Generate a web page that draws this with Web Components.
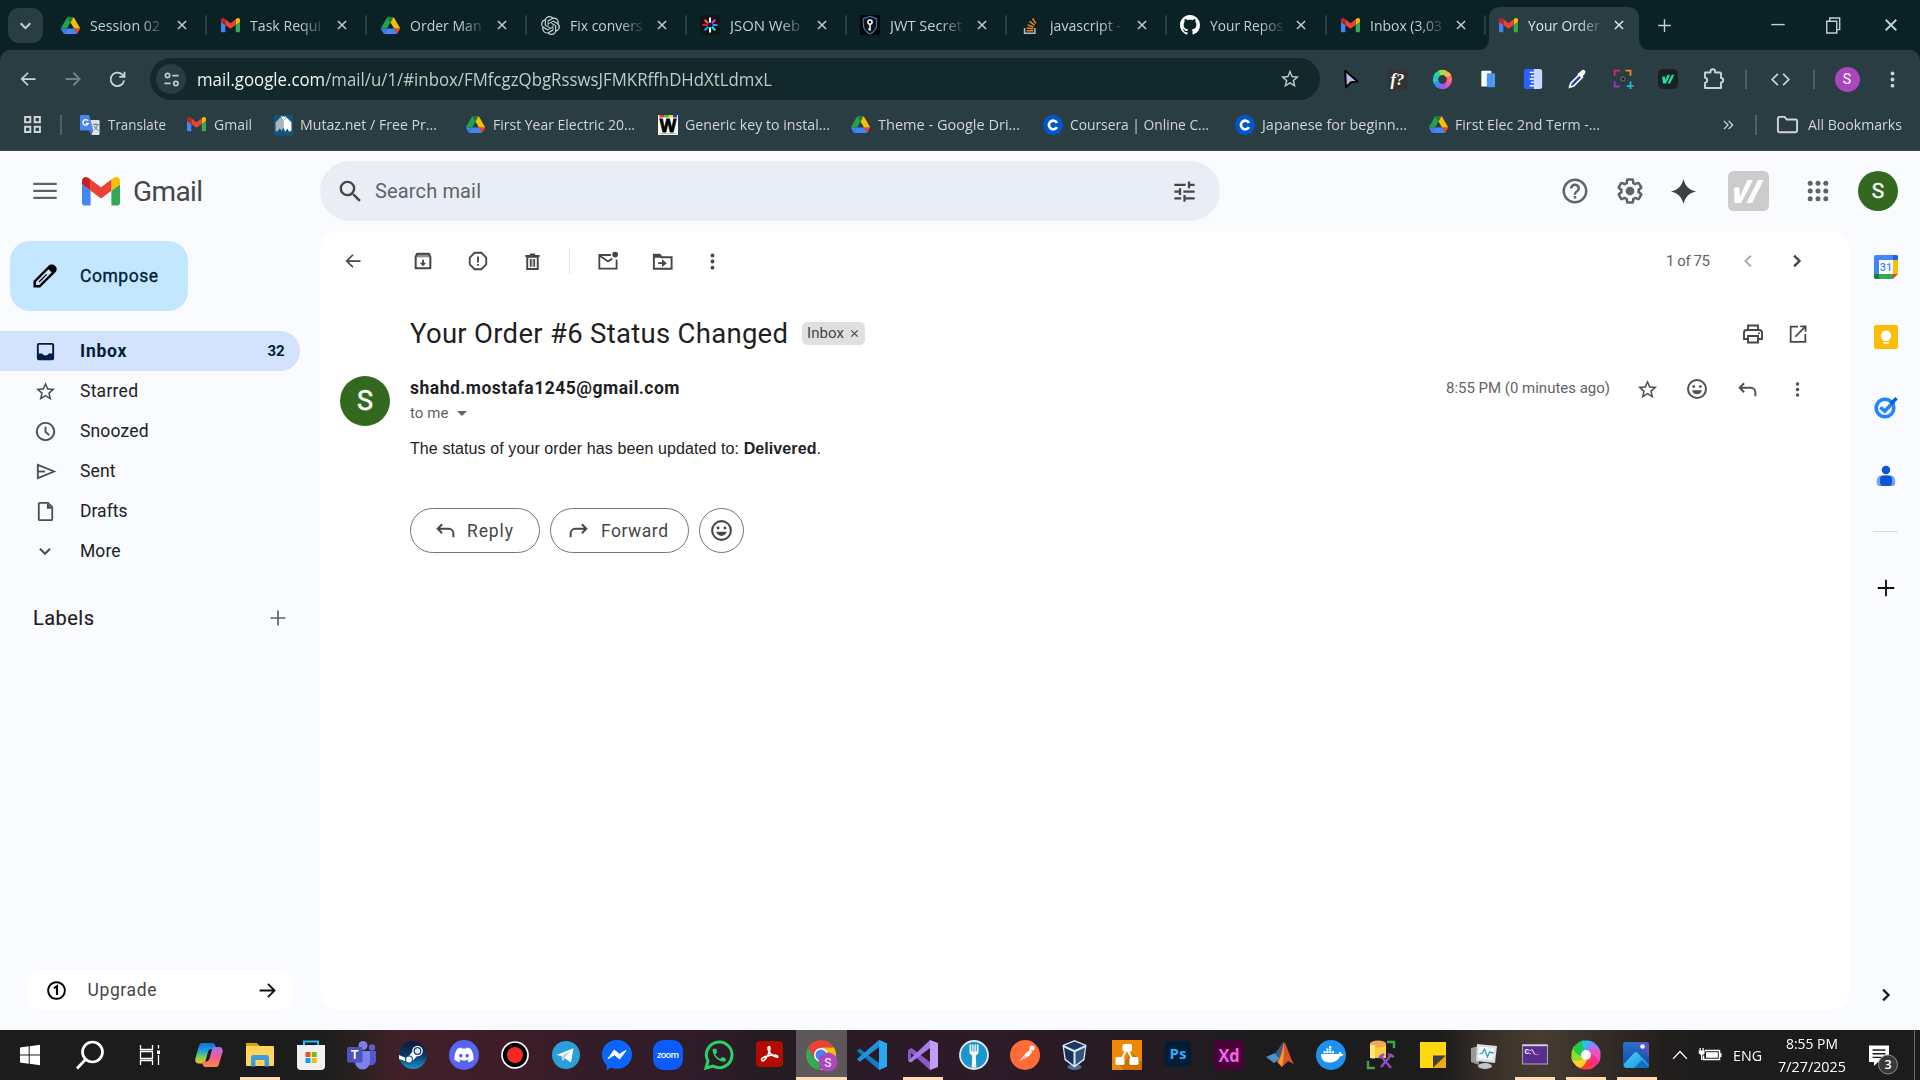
<!DOCTYPE html>
<html lang="en">
<head>
<meta charset="utf-8">
<title>Your Order #6 Status Changed - Gmail</title>
<style>
html,body{margin:0;padding:0;width:1920px;height:1080px;overflow:hidden;background:#f9fbff}
</style>
</head>
<body>
<desktop-screen></desktop-screen>
<script>
const st = (d, w = 2, extra = '') => `<path d="${d}" fill="none" stroke="currentColor" stroke-width="${w}" ${extra}/>`;
const fl = d => `<path d="${d}" fill="currentColor"/>`;
const C = [24, 24];
const SMILE = `<circle cx="12" cy="12" r="9" fill="none" stroke="currentColor" stroke-width="2"/><circle cx="8.7" cy="9.6" r="1.4" fill="currentColor"/><circle cx="15.3" cy="9.6" r="1.4" fill="currentColor"/><path d="M7 13.2h10c-.7 2.4-2.6 4-5 4s-4.300-1.600-5-4z" fill="currentColor"/>`;
const ICONS = {
  menu: [C, fl('M1.200 19.400h21.600v-2.100H1.200zM1.200 12.900h21.600v-2.100H1.200zM1.200 4.300v2.100h21.600V4.300z')],
  search: [C, fl('M15.5 14h-.79l-.28-.27A6.471 6.471 0 0 0 16 9.500 6.500 6.500 0 1 0 9.500 16c1.610 0 3.090-.59 4.230-1.570l.27.28v.79l5 4.990L20.490 19l-4.990-5zm-6 0C7.010 14 5 11.990 5 9.500S7.010 5 9.500 5 14 7.010 14 9.500 11.990 14 9.500 14z')],
  tune: [C, fl('M3 17v2h6v-2H3zM3 5v2h10V5H3zm10 16v-2h8v-2h-8v-2h-2v6h2zM7 9v2H3v2h4v2h2V9H7zm14 4v-2H11v2h10zm-6-4h2V7h4V5h-4V3h-2v6z')],
  help: [C, fl('M11 18h2v-2h-2v2zm1-16C6.480 2 2 6.480 2 12s4.480 10 10 10 10-4.480 10-10S17.520 2 12 2zm0 18c-4.410 0-8-3.590-8-8s3.590-8 8-8 8 3.590 8 8-3.590 8-8 8zm0-14c-2.210 0-4 1.790-4 4h2c0-1.100.9-2 2-2s2 .9 2 2c0 2-3 1.750-3 5h2c0-2.250 3-2.500 3-5 0-2.210-1.790-4-4-4z')],
  gear: [C, fl('M13.85 22.25h-3.7c-.74 0-1.36-.54-1.45-1.27l-.27-1.89c-.27-.14-.53-.29-.79-.46l-1.8.72c-.7.26-1.47-.03-1.81-.65L2.2 15.53c-.35-.66-.2-1.44.36-1.88l1.53-1.19c-.01-.15-.02-.3-.02-.46 0-.15.01-.31.02-.46l-1.52-1.19c-.59-.45-.74-1.26-.37-1.88l1.85-3.19c.34-.62 1.11-.9 1.79-.63l1.81.73c.26-.17.52-.32.78-.46l.27-1.91c.09-.7.71-1.25 1.44-1.25h3.7c.74 0 1.36.54 1.45 1.27l.27 1.89c.27.14.53.29.79.46l1.8-.72c.71-.26 1.48.03 1.82.65l1.84 3.18c.36.66.2 1.44-.36 1.88l-1.52 1.19c.01.15.02.3.02.46s-.01.31-.02.46l1.52 1.19c.56.45.72 1.23.37 1.86l-1.86 3.22c-.34.62-1.11.9-1.8.63l-1.8-.72c-.26.17-.52.32-.78.46l-.27 1.91c-.1.68-.72 1.22-1.46 1.22zm-3.23-2h2.76l.37-2.55.53-.22c.44-.18.88-.44 1.34-.78l.45-.34 2.38.96 1.38-2.4-2.03-1.58.07-.56c.03-.26.06-.51.06-.78s-.03-.53-.06-.78l-.07-.56 2.03-1.58-1.39-2.4-2.39.96-.45-.35c-.42-.32-.87-.58-1.33-.77l-.52-.22-.37-2.55h-2.76l-.37 2.55-.53.21c-.44.19-.88.44-1.34.79l-.45.33-2.38-.95-1.39 2.39 2.03 1.58-.07.56a7 7 0 0 0-.06.79c0 .26.02.53.06.78l.07.56-2.03 1.58 1.38 2.4 2.39-.96.45.35c.43.33.86.58 1.33.77l.53.22.38 2.55z') + '<circle cx="12" cy="12" r="3.500" fill="currentColor"/>'],
  spark: [C, fl('M12 0c1.200 6.300 5.700 10.800 12 12-6.300 1.200-10.800 5.700-12 12-1.200-6.300-5.700-10.800-12-12C6.300 10.800 10.800 6.300 12 0z')],
  apps: [C, [4.2, 12, 19.8].map(x => [4.2, 12, 19.8].map(y => `<circle cx="${x}" cy="${y}" r="2.500" fill="currentColor"/>`).join('')).join('')],
  star: [C, fl('M22 9.240l-7.190-.62L12 2 9.190 8.630 2 9.240l5.460 4.730L5.820 21 12 17.270 18.180 21l-1.630-7.030L22 9.240zM12 15.400l-3.760 2.270 1-4.280-3.320-2.880 4.380-.38L12 6.100l1.710 4.040 4.380.38-3.320 2.880 1 4.280L12 15.400z')],
  pencil: [C, `<path d="M2.500 21.500V17L16.300 3.200c.9-.9 2.100-.9 3 0l1.500 1.500c.9.9.9 2.100 0 3L7 21.500z" fill="none" stroke="#000" stroke-width="2.300"/><path d="M14.500 5l4.500 4.500 3-3.300c.8-1 .8-1.800 0-2.700l-1.600-1.600c-.9-.8-1.700-.8-2.600 0z" fill="#000"/><path d="M6.500 17.500l7-7" stroke="#000" stroke-width="1.200"/>`],
  inbox: [C, `<path fill="#041e49" fill-rule="evenodd" d="M5 3h14a2 2 0 0 1 2 2v14a2 2 0 0 1-2 2H5a2 2 0 0 1-2-2V5a2 2 0 0 1 2-2zm0 2v9h3.600c.7 1.300 1.900 2.100 3.400 2.100s2.700-.8 3.400-2.100H19V5z"/>`],
  clock: [C, st('M12 3a9 9 0 1 0 .01 0zM12 7v5.300l3.800 3.500', 2)],
  send: [C, st('M4 5l17 7-17 7z', 1.900, 'stroke-linejoin="miter"') + st('M4 12h7.500', 1.900)],
  draft: [C, st('M6 3h8.500L19 7.500V20a1 1 0 0 1-1 1H6a1 1 0 0 1-1-1V4a1 1 0 0 1 1-1z', 1.900) + fl('M13.500 3v6H19z')],
  down: [C, st('M6.500 9.500l5.500 5.500 5.500-5.500', 2.300)],
  plus: [C, st('M12 3v18M3 12h18', 2)],
  arrowR: [C, st('M3 12h17M12.500 4.500L20 12l-7.500 7.500', 2.200)],
  arrowL: [C, st('M21 12H4.500M12 4.500L4.500 12l7.500 7.500', 2.100)],
  one: [C, st('M12 2.500a9.500 9.500 0 1 0 .01 0z', 2.200) + `<path d="M9 9.300l3.600-2.200v10" fill="none" stroke="currentColor" stroke-width="2.500"/>`],
  archive: [C, st('M4 7.500v12.500h16V7.500L18.500 4h-13z', 2.200, 'stroke-linejoin="round"') + '<path d="M5 4.500h14v3.500H5z" fill="currentColor" opacity=".6"/>' + fl('M11 10.500h2V14h2.500L12 17.700 8.500 14H11z')],
  spam: [C, st('M8.300 3h7.400L21 8.300v7.400L15.700 21H8.300L3 15.700V8.300z', 2) + fl('M11 7h2v6.500h-2zM11 15.200h2v2h-2z')],
  trash: [C, st('M6 6.500h12V20.500H6zM3.800 5.800h16.400M9 4h6', 2.200) + '<path d="M9 9h2v9H9zM13 9h2v9h-2z" fill="currentColor"/><path d="M11 9h2v9h-2z" fill="currentColor" opacity=".35"/>'],
  unread: [C, st('M15.500 5.200H3.500v14.300h18V9.800M4 6l8.500 6L17 9', 1.900) + '<circle cx="20" cy="4.800" r="3" fill="currentColor"/>'],
  moveto: [C, st('M3 6v13.500h18.500V7.500H11L9 5H3z', 2) + fl('M3 5h7l2 3H3zM11.500 9.700l5 4-5 4v-3h-4v-2h4z')],
  dots: [C, '<circle cx="12" cy="5" r="2.200" fill="currentColor"/><circle cx="12" cy="12" r="2.200" fill="currentColor"/><circle cx="12" cy="19" r="2.200" fill="currentColor"/>'],
  left: [C, st('M15.500 5.500L9 12l6.500 6.500', 2.400)],
  right: [C, st('M8.500 5.500L15 12l-6.500 6.500', 2.900)],
  print: [C, st('M7 8V3.500h10V8M7 17H3V10.500A2.500 2.500 0 0 1 5.500 8h13a2.500 2.500 0 0 1 2.500 2.500V17h-4M7 14h10v6.500H7z', 1.900) + '<circle cx="18" cy="11.200" r="1" fill="currentColor"/>'],
  open: [C, st('M12 4H4v16.500h16V12M14.500 3.700H20.300V9.500M20 4L9 15', 1.900)],
  smile: [C, SMILE],
  reply: [C, st('M8.500 5.500L3.800 10.200l4.700 4.700M4 10.200h11.500a4.700 4.700 0 0 1 4.700 4.700V19', 2)],
  forward: [C, st('M15.500 5.500l4.700 4.700-4.700 4.700M20 10.200H8.500a4.700 4.700 0 0 0-4.700 4.700V19', 2)],
  close: [C, st('M5 5l14 14M19 5L5 19', 2.500)],
  gmail: [[88, 66], `<g transform="translate(-52 -42)"><path fill="#4285f4" d="M58 108h14V74L52 59v43c0 3.320 2.690 6 6 6"/><path fill="#34a853" d="M120 108h14c3.320 0 6-2.690 6-6V59l-20 15"/><path fill="#fbbc04" d="M120 48v26l20-15v-8c0-7.420-8.470-11.650-14.400-7.200"/><path fill="#ea4335" d="M72 74V48l24 18 24-18v26L96 92"/><path fill="#c5221f" d="M52 51v8l20 15V48l-5.600-4.200c-5.940-4.450-14.400-.22-14.400 7.200"/></g>`],
  drive: [[87.3, 78], `<path fill="#3b7ff5" d="m6.600 66.850 3.850 6.650c.8 1.400 1.950 2.500 3.300 3.300l13.750-23.800h-27.500c0 1.550.4 3.100 1.200 4.500z"/><path fill="#22a152" d="m43.650 25-13.750-23.800c-1.350.8-2.500 1.900-3.300 3.300l-25.400 44a9.060 9.060 0 0 0 -1.200 4.500h27.500z"/><path fill="#ea4335" d="m73.550 76.800c1.350-.8 2.500-1.900 3.300-3.300l1.600-2.750 7.650-13.250c.8-1.400 1.200-2.950 1.200-4.500h-27.502l5.852 11.500z"/><path fill="#188038" d="m43.650 25 13.750-23.800c-1.350-.8-2.900-1.200-4.500-1.200h-18.500c-1.600 0-3.150.45-4.500 1.200z"/><path fill="#4285f4" d="m59.800 53h-32.300l-13.750 23.800c1.350.8 2.900 1.200 4.500 1.200h50.800c1.600 0 3.150-.45 4.500-1.200z"/><path fill="#fbbc04" d="m73.400 26.500-12.700-22c-.8-1.400-1.950-2.500-3.300-3.300l-13.750 23.800 16.150 28h27.450c0-1.550-.4-3.100-1.200-4.500z"/>`],
  openai: [C, fl('M22.2819 9.8211a5.9847 5.9847 0 0 0-.5157-4.9108 6.0462 6.0462 0 0 0-6.5098-2.9A6.0651 6.0651 0 0 0 4.9807 4.1818a5.9847 5.9847 0 0 0-3.9977 2.9 6.0462 6.0462 0 0 0 .7427 7.0966 5.98 5.98 0 0 0 .511 4.9107 6.051 6.051 0 0 0 6.5146 2.9001A5.9847 5.9847 0 0 0 13.2599 24a6.0557 6.0557 0 0 0 5.7718-4.2058 5.9894 5.9894 0 0 0 3.9977-2.9001 6.0557 6.0557 0 0 0-.7475-7.0729zm-9.022 12.6081a4.4755 4.4755 0 0 1-2.8764-1.0408l.1419-.0804 4.7783-2.7582a.7948.7948 0 0 0 .3927-.6813v-6.7369l2.02 1.1686a.071.071 0 0 1 .038.052v5.5826a4.504 4.504 0 0 1-4.4945 4.4944zm-9.6607-4.1254a4.4708 4.4708 0 0 1-.5346-3.0137l.142.0852 4.783 2.7582a.7712.7712 0 0 0 .7806 0l5.8428-3.3685v2.3324a.0804.0804 0 0 1-.0332.0615L9.74 19.9502a4.4992 4.4992 0 0 1-6.1408-1.6464zM2.3408 7.8956a4.485 4.485 0 0 1 2.3655-1.9728V11.6a.7664.7664 0 0 0 .3879.6765l5.8144 3.3543-2.0201 1.1685a.0757.0757 0 0 1-.071 0l-4.8303-2.7865A4.504 4.504 0 0 1 2.3408 7.872zm16.5963 3.8558L13.1038 8.364 15.1192 7.2a.0757.0757 0 0 1 .071 0l4.8303 2.7913a4.4944 4.4944 0 0 1-.6765 8.1042v-5.6772a.79.79 0 0 0-.407-.667zm2.0107-3.0231l-.142-.0852-4.7735-2.7818a.7759.7759 0 0 0-.7854 0L9.409 9.2297V6.8974a.0662.0662 0 0 1 .0284-.0615l4.8303-2.7866a4.4992 4.4992 0 0 1 6.6802 4.66zM8.3065 12.863l-2.02-1.1638a.0804.0804 0 0 1-.038-.0567V6.0742a4.4992 4.4992 0 0 1 7.3757-3.4537l-.142.0805L8.704 5.459a.7948.7948 0 0 0-.3927.6813zm1.0976-2.3654l2.602-1.4998 2.6069 1.4998v2.9994l-2.5974 1.4997-2.6067-1.4997Z')],
  jwt: [C, '<rect width="24" height="24" rx="4" fill="#141414"/>' + ['#fff', '#d63aff', '#3a8bff', '#00f2e6', '#fff', '#00b9f1', '#fb015b', '#ff5a3c'].map((c, i) => `<path d="M12 9V3" stroke="${c}" stroke-width="2.400" transform="rotate(${i * 45} 12 12)"/>`).join('')],
  shield: [C, '<rect width="24" height="24" fill="#050505"/><path d="M12 1.500l8 3v7c0 5.500-3.500 9.300-8 11.200-4.500-1.900-8-5.700-8-11.200v-7z" fill="#101418" stroke="#3d7fc0" stroke-width="1.300"/><circle cx="12" cy="8.500" r="2.500" fill="none" stroke="#fff" stroke-width="1.800"/><path d="M12 11v8M12 17h-2" stroke="#fff" stroke-width="1.800"/>'],
  stack: [C, '<path d="M4.500 15v6.700h13V15" fill="none" stroke="#bcbbbb" stroke-width="1.900"/><path d="M7 18.600h8.300M7.300 15.200l8 .9M8.300 11.200l7.500 2.600M10.800 6.700l6.300 4.700M14.500 3l4.300 6.400" stroke="#f48024" stroke-width="1.900"/>'],
  github: [[16, 16], '<g color="#fff">' + fl('M8 0C3.580 0 0 3.580 0 8c0 3.540 2.290 6.530 5.470 7.590.4.070.55-.17.55-.38 0-.19-.01-.82-.01-1.490-2.010.37-2.530-.49-2.690-.94-.09-.23-.48-.94-.82-1.130-.28-.15-.68-.52-.01-.53.63-.01 1.080.58 1.230.82.72 1.210 1.870.87 2.330.66.07-.52.28-.87.51-1.070-1.780-.2-3.640-.89-3.640-3.950 0-.87.31-1.590.82-2.150-.08-.2-.36-1.020.08-2.120 0 0 .67-.21 2.200.82.64-.18 1.320-.27 2-.27.68 0 1.360.09 2 .27 1.530-1.040 2.200-.82 2.200-.82.44 1.100.16 1.920.08 2.120.51.56.82 1.270.82 2.150 0 3.070-1.870 3.750-3.650 3.950.29.25.54.73.54 1.480 0 1.070-.01 1.930-.01 2.200 0 .21.15.46.55.38A8.013 8.013 0 0 0 16 8c0-4.420-3.580-8-8-8z') + '</g>'],
  reload: [C, st('M19.500 13A7.700 7.700 0 1 1 17.300 6.300L19.500 8.500', 2.100) + st('M20 3v6h-6', 2.100)],
  site: [C, st('M13 7h8M3 17h8', 2.300) + '<circle cx="7" cy="7" r="2.700" fill="none" stroke="currentColor" stroke-width="2.200"/><circle cx="17.500" cy="17" r="2.700" fill="none" stroke="currentColor" stroke-width="2.200"/>'],
  cursor: [C, '<path d="M5 2l15 13-8 .8L6 22z" fill="#8ec9f7" stroke="#000" stroke-width="2.300" stroke-linejoin="round"/><path d="M7 9l10 5-6 .5L8 18z" fill="#e9a6e4"/>'],
  fq: [C, '<rect x="1" y="0" width="22" height="24" rx="3" fill="#353232"/><text x="12" y="18" text-anchor="middle" font-family="Liberation Serif,serif" font-style="italic" font-weight="700" font-size="19" fill="#fff">f?</text>'],
  ring: [C, ['#ffb23e', '#ff6e6e', '#f04fc0', '#9a5cf0', '#3f8cf5', '#22c3e0', '#2bd48c', '#a5dc52'].map((c, i) => `<path d="M12 4a8 8 0 0 1 5.900 2.600" fill="none" stroke="${c}" stroke-width="6" transform="rotate(${i * 45 + 20} 12 12)"/>`).join('')],
  pages: [C, '<rect x="4" y="2" width="12" height="19" rx="1" fill="#fff"/><rect x="10.500" y="5" width="10" height="17" rx="1.500" fill="#4a97f5"/>'],
  ruler: [C, '<path d="M4 0h9v24H4a3 3 0 0 1-3-3V3a3 3 0 0 1 3-3z" fill="#2962ff"/><path d="M13 0h7a3 3 0 0 1 3 3v18a3 3 0 0 1-3 3h-7z" fill="#c9d8ff"/><path d="M8 4h5M9.500 8H13M8 12h5M9.500 16H13M8 20h5" stroke="#fff" stroke-width="1.700"/>'],
  dropper: [C, '<path d="M3 22l1.500-5L15 6.500l3.500 3.500L8 20.500z" fill="#2c3fa8" stroke="#fff" stroke-width="2"/><path d="M12.500 6l2-1.500L18 1.500c2-1.500 5 1 4 3.500l-3.500 4-1 2.500z" fill="#fff"/>'],
  camera: [C, '<path d="M2 8V2h6" fill="none" stroke="#e91e80" stroke-width="2.200"/><path d="M15 2h6v6" fill="none" stroke="#f08c1e" stroke-width="2.200"/><path d="M8 21H2v-6" fill="none" stroke="#a32bd6" stroke-width="2.200"/><path d="M21 15v9M16.500 20.500h8" fill="none" stroke="#24b5d8" stroke-width="2.200"/><circle cx="12" cy="12" r="4.500" fill="#4c5660" stroke="#222a30"/><circle cx="12" cy="12" r="1.300" fill="#111"/>'],
  vv: [C, '<rect x="0" y="0" width="24" height="24" rx="6" fill="#1b2122"/><path d="M5 9h3.200l.6 4L11.500 7h3L9.500 17.500H6zM11.500 17.500l5-10.500h3l-5 10.500z" fill="#20e0a0"/>'],
  puzzle: [C, st('M4 5.500h5.500v-1a2.300 2.300 0 0 1 4.600 0v1H19a1 1 0 0 1 1 1V11a2.200 2.200 0 0 1 0 4.400V21H4v-5c3-.8 3-4.500 0-5.300z', 1.900, 'stroke-linejoin="round"')],
  code: [C, st('M9 5.500L2.500 12 9 18.500M15 5.500l6.500 6.500-6.500 6.500', 2)],
  grid: [C, st('M3.500 3.500h6v6h-6zM14.500 3.500h6v6h-6zM3.500 14.500h6v6h-6zM14.500 14.500h6v6h-6z', 2.200)],
  translate: [C, '<path d="M11 6h11a1.500 1.500 0 0 1 1.500 1.500v15A1.500 1.500 0 0 1 22 24h-8z" fill="#dfe1e5"/><path d="M1.500 0H11l5 18.500H1.500A1.500 1.500 0 0 1 0 17V1.500A1.500 1.500 0 0 1 1.500 0z" fill="#4a86f0"/><path d="M10 18.500h6L13.500 24z" fill="#3a6bd0"/><path d="M9.600 7A3.300 3.300 0 1 0 10 10H7" fill="none" stroke="#fff" stroke-width="1.600"/><path d="M15.500 11.500h7M19 10v1.500M21 11.500c-.5 3-2.500 5.500-4 6.500M17 13c1 2 3 4.500 5 5.500" stroke="#6b7885" stroke-width="1.200" fill="none"/>'],
  mutaz: [C, '<rect width="24" height="26" fill="#12557a"/><path d="M2 20V9l6-6 4 4v8l-2 5-3-3-3 4z" fill="#a9b4bb"/><path d="M12 7l4-4 6 6v11l-3 1-2-4-3 4-2-5z" fill="#fff"/><path d="M8 2h8l-4 5z" fill="#fff"/>'],
  wkey: [C, '<rect width="24" height="24" fill="#fff"/><path d="M1.500 0H8v3H1.500z" fill="#e33"/><path d="M8 0h5v3H8z" fill="#3b3"/><path d="M13 0h5v3h-5z" fill="#dd2"/><path d="M18 0h5v3h-5z" fill="#33d"/><text x="12" y="20" text-anchor="middle" font-family="Liberation Sans,sans-serif" font-weight="700" font-size="21" stroke="#000" fill="#000">W</text><path d="M2 22.500h20" stroke="#999" stroke-width="1"/>'],
  coursera: [C, '<circle cx="12" cy="12" r="12" fill="#0056d2"/><path d="M16.800 14.600a5.200 5.200 0 1 1 0-5.200" fill="none" stroke="#fff" stroke-width="3.300"/>'],
  more2: [C, st('M5 5l7 7-7 7M13 5l7 7-7 7', 2.200)],
  folderO: [C, st('M2 5.500A1.500 1.500 0 0 1 3.500 4H9l2.300 2.800h9.200A1.500 1.500 0 0 1 22 8.300v10.200a1.500 1.500 0 0 1-1.500 1.500h-17A1.500 1.500 0 0 1 2 18.500z', 2)],
  min: [C, st('M4 11.500h16', 1.700)],
  restore: [C, st('M4.500 7.500h12v14h-12zM8 7V3.500h12v14h-3', 1.700)],
  slashV: [[41, 40], '<rect width="41" height="40" rx="5.500" fill="#ccc"/><path d="M6 16.500h5l1 9L19.500 9H25L13 32H6.500zM18.500 32L30 9h5.500L24 32z" fill="#fff"/>'],
  calendar: [C, '<path d="M2 0h20a2 2 0 0 1 2 2v3H5v14H0V2a2 2 0 0 1 2-2z" fill="#4285f4"/><path d="M19 0h3a2 2 0 0 1 2 2v3h-5z" fill="#1967d2"/><path d="M19 5h5v14h-5z" fill="#fbbc04"/><path d="M5 19h14v5H2a2 2 0 0 1-2-2v-3z" fill="#34a853"/><path d="M0 19h5v5H2a2 2 0 0 1-2-2z" fill="#188038"/><path d="M19 19h5l-5 5z" fill="#ea4335"/><path d="M5 5h14v14H5z" fill="#fff"/><text x="12" y="16" text-anchor="middle" font-family="Roboto,sans-serif" font-weight="500" font-size="11" fill="#4285f4">31</text>'],
  keep: [C, '<rect width="24" height="24" rx="2" fill="#fbbc04"/><path d="M12 5.500a5.200 5.200 0 0 0-2.700 9.600V16h5.400v-.9A5.200 5.200 0 0 0 12 5.500zM9.300 17h5.400v1.800H9.300z" fill="#fff"/>'],
  tasks: [C, '<circle cx="11" cy="13" r="8.800" fill="none" stroke="#2684fc" stroke-width="3.600"/><path d="M6.500 12.300l4.200 4L20 6.500" fill="none" stroke="#2684fc" stroke-width="3.600"/><path d="M15.500 7.500l6-5.500 2.300 2.500-6 5.500z" fill="#0066da"/>'],
  contacts: [C, '<circle cx="12" cy="5.500" r="4.600" fill="#0b57d0"/><path d="M7 11.500h10a5 5 0 0 1 5 5v3.500a3 3 0 0 1-3 3H5a3 3 0 0 1-3-3v-3.500a5 5 0 0 1 5-5z" fill="#7ba1f7"/><rect x="5.500" y="11.500" width="13" height="11.500" rx="4" fill="#0b57d0"/>']
};
const B = [30, 30];
Object.assign(ICONS, {
  win: [B, '<path d="M5 7.500l8.700-1.200v8.200H5zM14.700 6.200L25 4.700v9.800H14.700zM5 15.500h8.700v8.200L5 22.500zM14.700 15.500H25v9.800l-10.300-1.500z" fill="#fff"/>'],
  wsearch: [B, '<circle cx="17.500" cy="12" r="10" fill="none" stroke="#fff" stroke-width="2.700"/><path d="M10.500 19.500L2 28.500" stroke="#fff" stroke-width="2.800"/>'],
  taskview: [B, '<path d="M5.500 5v4.500h12V5M5.500 25v-4.500h12V25M5.500 11.500h12v7h-12zM23.500 5v3.500M23.500 15v10" fill="none" stroke="#fff" stroke-width="1.300"/><path d="M22 10.500h3V14h-3z" fill="#fff"/>'],
  copilot: [B, '<defs><linearGradient id="a" x2="0" y2="1"><stop stop-color="#1569d8"/><stop offset=".4" stop-color="#1fa4dc"/><stop offset=".65" stop-color="#6fcb58"/><stop offset="1" stop-color="#f6c52d"/></linearGradient><linearGradient id="b" x2="0" y2="1"><stop stop-color="#a96cf0"/><stop offset=".5" stop-color="#ee5d93"/><stop offset="1" stop-color="#ff8a3c"/></linearGradient></defs><path d="M8 3h10c2 0 3 1 3.500 3l1 3h-5c-2 0-3 1-3.500 3l-2.500 9c-.5 1.500-1.500 2.500-3 2.500H5C2 23.500.5 21 1.500 18L5 6c.5-2 1.500-3 3-3z" fill="url(#a)"/><path d="M22 27H12c-2 0-3-1-3.500-3l-.5-2.500h4c2 0 3-1 3.500-3l2.500-9C18.500 8 19.500 7 21 7h4c3 0 4.500 2.500 3.500 5.500L25 24c-.5 2-1.500 3-3 3z" fill="url(#b)"/>'],
  folder: [B, '<path d="M1 3h11l2.500 3v6H1z" fill="#e0a106"/><path d="M2 6h26a1 1 0 0 1 1 1v18a1 1 0 0 1-1 1H2a1 1 0 0 1-1-1V7z" fill="#ffd65c"/><path d="M6 26.500V17.500A2.500 2.500 0 0 1 8.500 15h13a2.500 2.500 0 0 1 2.500 2.500v9h-4.500V20h-9v6.500z" fill="#3f9be0"/>'],
  store: [B, '<path d="M8 6V1.500h14V6" fill="none" stroke="#2bbcf2" stroke-width="2.200"/><path d="M1 5h28v21a4 4 0 0 1-4 4H5a4 4 0 0 1-4-4z" fill="#f1f1f2"/><path d="M9.500 12h5v5h-5z" fill="#f25022"/><path d="M15.700 12h5v5h-5z" fill="#7fba00"/><path d="M9.500 18h5v5h-5z" fill="#00a4ef"/><path d="M15.700 18h5v5h-5z" fill="#ffb900"/>'],
  teams: [B, '<circle cx="25" cy="7.500" r="3.200" fill="#5b62c8"/><circle cx="16" cy="5.500" r="4.500" fill="#7b83eb"/><path d="M19 11h10v10a5 5 0 0 1-7 4z" fill="#5059c9"/><path d="M8 11h15v11a7.300 7.300 0 0 1-15 0z" fill="#7b83eb"/><rect x="0" y="7" width="15.500" height="15.500" rx="1.500" fill="#4b53bc"/><text x="7.700" y="19" text-anchor="middle" font-family="Liberation Sans,sans-serif" font-weight="700" font-size="12" fill="#fff">T</text>'],
  steam: [B, '<defs><linearGradient id="a" x2="0" y2="1"><stop stop-color="#10183c"/><stop offset=".5" stop-color="#0c3565"/><stop offset="1" stop-color="#1795ca"/></linearGradient></defs><circle cx="15" cy="15" r="14" fill="url(#a)"/><path d="M1 15l8 3.500 5.500-7L19 16l-4 4.500-5 1.500-9-3z" fill="#fff"/><circle cx="19.500" cy="11" r="5.300" fill="#fff"/><circle cx="19.500" cy="11" r="3.300" fill="#dfe8f0" stroke="#17406f" stroke-width="1.300"/><circle cx="11" cy="19.500" r="3.500" fill="#fff" stroke="#17508a" stroke-width="1.200"/>'],
  discord: [B, '<circle cx="15" cy="15" r="15" fill="#5865f2"/><g transform="translate(5.400 5.300) scale(.8)"><path fill="#fff" d="M20.317 4.3698a19.7913 19.7913 0 00-4.8851-1.5152.0741.0741 0 00-.0785.0371c-.211.3753-.4447.8648-.6083 1.2495-1.8447-.2762-3.68-.2762-5.4868 0-.1636-.3933-.4058-.8742-.6177-1.2495a.077.077 0 00-.0785-.037 19.7363 19.7363 0 00-4.8852 1.515.0699.0699 0 00-.0321.0277C.5334 9.0458-.319 13.5799.0992 18.0578a.0824.0824 0 00.0312.0561c2.0528 1.5076 4.0413 2.4228 5.9929 3.0294a.0777.0777 0 00.0842-.0276c.4616-.6304.8731-1.2952 1.226-1.9942a.076.076 0 00-.0416-.1057c-.6528-.2476-1.2743-.5495-1.8722-.8923a.077.077 0 01-.0076-.1277c.1258-.0943.2517-.1923.3718-.2914a.0743.0743 0 01.0776-.0105c3.9278 1.7933 8.18 1.7933 12.0614 0a.0739.0739 0 01.0785.0095c.1202.099.246.1981.3728.2924a.077.077 0 01-.0066.1276 12.2986 12.2986 0 01-1.873.8914.0766.0766 0 00-.0407.1067c.3604.698.7719 1.3628 1.225 1.9932a.076.076 0 00.0842.0286c1.961-.6067 3.9495-1.5219 6.0023-3.0294a.077.077 0 00.0313-.0552c.5004-5.177-.8382-9.6739-3.5485-13.6604a.061.061 0 00-.0312-.0286zM8.02 15.3312c-1.1825 0-2.1569-1.0857-2.1569-2.419 0-1.3332.9555-2.4189 2.157-2.4189 1.2108 0 2.1757 1.0952 2.1568 2.419 0 1.3332-.9555 2.4189-2.1569 2.4189zm7.9748 0c-1.1825 0-2.1569-1.0857-2.1569-2.419 0-1.3332.9554-2.4189 2.1569-2.4189 1.2108 0 2.1757 1.0952 2.1568 2.419 0 1.3332-.946 2.4189-2.1568 2.4189Z"/></g>'],
  rec: [B, '<circle cx="15" cy="15" r="13" fill="#000" stroke="#fff" stroke-width="1.700"/><circle cx="15" cy="15" r="8" fill="#f32a24"/>'],
  telegram: [B, '<circle cx="15" cy="15" r="14" fill="#2a9fd8"/><path d="M5.500 15L22.500 8.200 20 22.500l-6.300-4.300-2 2.800-1.200-5z" fill="#fff"/><path d="M10.500 16L20 10.500l-6.500 7.500-1.700 3z" fill="#b5d8ee"/>'],
  messenger: [B, '<path d="M15 0C6.500 0 0 6.200 0 14.500 0 18.800 1.800 22.600 4.700 25.200V30l4.500-2.300c1.800.7 3.700 1 5.800 1 8.500 0 15-6 15-14.200S23.500 0 15 0z" fill="#0a66ff"/><path d="M6 18.800l6.300-8.800 5 4.300L24 10.500l-6.400 8.500-5-4.200z" fill="#fff" stroke="#fff" stroke-width="1"/>'],
  zoom: [B, '<rect width="30" height="30" rx="11" fill="#0b5cff"/><text x="15" y="18.200" text-anchor="middle" font-family="Open Sans,sans-serif" font-weight="600" font-size="9" textLength="22" fill="#fff">zoom</text>'],
  whatsapp: [B, '<path d="M2 28l2-7a12.800 12.800 0 1 1 5 5z" fill="none" stroke="#25d366" stroke-width="3"/><g transform="translate(6.500 6.500) scale(.72)"><path fill="#25d366" d="M6.620 10.790c1.440 2.830 3.760 5.140 6.590 6.590l2.200-2.200c.27-.27.67-.36 1.020-.24 1.120.37 2.330.57 3.570.57.55 0 1 .45 1 1V20c0 .55-.45 1-1 1-9.390 0-17-7.610-17-17 0-.55.45-1 1-1h3.500c.55 0 1 .45 1 1 0 1.250.2 2.450.57 3.570.11.35.03.74-.25 1.020z"/></g>'],
  pdf: [B, '<rect x="1" y="1" width="27" height="26" rx="4" fill="#b30b00"/><path d="M6.500 19.500c0-2.500 12-6 16-3.500 2 2.500-6 1-9-5.500-1.500-4 1.500-5.500 1.500-2 0 3.500-3.500 9.500-6 11.800-1.200 1-2.500.5-2.500-.8z" fill="none" stroke="#fff" stroke-width="1.600"/>'],
  chrome: [B, '<path d="M2 7.500A15 15 0 0 1 28 7.500H15L8 18z" fill="#ea4335"/><path d="M2 7.500l6.500 11.200L15 22.500 13 30A15 15 0 0 1 2 7.500z" fill="#34a853"/><path d="M15 7.500h13A15 15 0 0 1 14 30l7-12z" fill="#fbbc04"/><circle cx="15" cy="15" r="7" fill="#fff"/><circle cx="15" cy="15" r="5.500" fill="#4285f4"/><circle cx="22" cy="22" r="9.500" fill="#ab47bc"/><text x="22" y="26.500" text-anchor="middle" font-family="Roboto,sans-serif" font-weight="500" font-size="12" fill="#f3d8f7">S</text>'],
  vscode: [B, '<path d="M22 0l8 3.500v23L22 30 0 11l2.500-2.500L22 23z" fill="#0f7dc8"/><path d="M22 0v7L2.500 22 0 19z" fill="#2190dd"/><path d="M22 0l8 3.500v23L22 30z" fill="#2aa7f3"/>'],
  vs: [B, '<path d="M0 10l3.500-2L22 22v8L3 13v7l-3 1z" fill="#8a58c9"/><path d="M0 21l3 1.500L22 8V0z" fill="#a67ce6"/><path d="M22 0l8 3v24l-8 3z" fill="#c29df6"/>'],
  fork: [B, '<circle cx="15" cy="15" r="14" fill="#1b97cf" stroke="#dfe9ee" stroke-width="1.800"/><path d="M10.500 4.500v7.500c0 2 1.500 3 2.800 3.300L12.700 27.500h4.600l-.6-12.200c1.300-.3 2.800-1.300 2.800-3.300V4.500z" fill="#fff"/><path d="M12.700 4v7.500M15 4v7.500M17.300 4v7.500" stroke="#1b97cf" stroke-width="1"/>'],
  postman: [B, '<circle cx="15" cy="15" r="15" fill="#ff6c37"/><path d="M8 23l8-10 4-3 2 2-3 4-7 4z" fill="#fff"/><circle cx="22" cy="8" r="2.600" fill="#fff"/><path d="M8 23l8-7" stroke="#e0562a" stroke-width=".8"/>'],
  vbox: [B, '<g transform="translate(-1.500 0)"><ellipse cx="15" cy="27" rx="7" ry="3" fill="#4e6b95"/><path d="M15 0l12 5-2 15-10 7.500L5 20 3 5z" fill="#dde7f2"/><path d="M15 1.500L25 5.500 15 10 5 5.500z" fill="#1c3863"/><path d="M4.500 7.500L14 12v13L6.300 19z" fill="#163159"/><path d="M25.500 7.500L16 12v13l7.700-6z" fill="#315482"/></g>'],
  drawio: [B, '<rect width="30" height="30" fill="#f08705"/><path d="M20 13l10 9v8H12l-4-5z" fill="#d07000"/><path d="M15 9L8 22M15 9l7 13" stroke="#fff" stroke-width="2"/><rect x="10.500" y="4" width="9.500" height="7.500" rx="1.500" fill="#fff"/><rect x="3.500" y="17" width="9" height="8" rx="1.500" fill="#fff"/><rect x="17.500" y="17" width="9" height="8" rx="1.500" fill="#fff"/>'],
  ps: [B, '<rect x="1.500" y="1" width="27" height="26" rx="5" fill="#001e36"/><text x="15" y="19" text-anchor="middle" font-family="Open Sans,sans-serif" font-weight="700" font-size="15" fill="#31a8ff">Ps</text>'],
  xd: [B, '<rect x="0" y="0" width="30" height="30" rx="5" fill="#470137"/><text x="15" y="21.500" text-anchor="middle" font-family="Open Sans,sans-serif" font-weight="700" font-size="17" textLength="21" lengthAdjust="spacingAndGlyphs" fill="#ff61f6">Xd</text>'],
  matlab: [B, '<path d="M1 17l9-4 5 6-6 4z" fill="#4a90c9"/><path d="M10 13c4-3 6-10 9-11l-4 17z" fill="#2d5f8e"/><path d="M19 2c3 3 6 16 10 22l-6-3-6 6-5-5c3-3 5-13 7-20z" fill="#d9502c"/><path d="M19 2c-1 6-2 14-6 20l4 5c2-9 2-18 2-25z" fill="#f6a02c"/>'],
  docker: [B, '<circle cx="15" cy="15" r="15" fill="#1d91f0"/><path d="M5 14h17c1 0 1.500-1 1.500-2.500 1.500.5 2 1.500 2 2.500 1 0 1.500 0 2 .3-.5 1.500-1.800 2-3.500 2C22 21 18 22.500 13 22.500 8 22.500 5 19.500 5 14z" fill="#fff"/><path d="M7.500 11h2.200v2.300H7.500zM10.300 11h2.200v2.300h-2.200zM13.100 11h2.200v2.300h-2.200zM15.900 11h2.200v2.300h-2.200zM10.300 8.400h2.200v2.200h-2.200zM13.100 8.400h2.200v2.200h-2.200zM13.100 6h2.200v2h-2.200z" fill="#fff"/>'],
  db: [B, '<path d="M3 3h16v15H3z" fill="#f6cf3b"/><ellipse cx="11" cy="4" rx="8" ry="3.400" fill="#f0a95a"/><path d="M3 5h5v13.500H5a2 2 0 0 1-2-2z" fill="#ffe27a"/><path d="M20 2h7v6" fill="none" stroke="#3fa34d" stroke-width="2.400"/><path d="M1 21v7h7" fill="none" stroke="#3fa34d" stroke-width="2.400"/><path d="M13 15l11 13M25 14l-11 13M12 18l5-4M21 14l6 3" stroke="#8d4fc0" stroke-width="2.500"/>'],
  sticky: [B, '<path d="M2 2h26v14L16 28H2z" fill="#ffd90f"/><path d="M15 15.500h13L15 28z" fill="#3e3e3e"/><path d="M28 15.500V28H15z" fill="#f0a912"/>'],
  monitor: [B, '<path d="M2 8l8-2v19l-8-3z" fill="#9a9a9a"/><ellipse cx="16" cy="26" rx="7" ry="3" fill="#c5c5c5"/><path d="M8 4l20 2-2 17-19-2z" fill="#dcdcdc"/><path d="M10 6.500l15.500 1.500L24 20 9 18.500z" fill="#f3fbff"/><path d="M10.500 14l3-1 2-4 3 8 2-5 4 1" fill="none" stroke="#3d93c9" stroke-width="1.300"/>'],
  cmd: [B, '<rect x="2.500" y="5" width="25" height="19" fill="#5c2d91" stroke="#9b9b9b" stroke-width="1.200"/><path d="M2.500 5.300h25" stroke="#d0d0d0" stroke-width="1.800"/><text x="4.500" y="13.500" font-family="Liberation Mono,monospace" font-weight="700" font-size="7.500" textLength="14" fill="#fff">C:\\_</text>'],
  ring2: [B, ['#22c3f0', '#9a7cf5', '#f04fc0', '#ff2d8d', '#ff3d3d', '#ffd02e', '#8be02c', '#22c84c'].map((c, i) => `<path d="M15 10c2-6 7-8.500 10.600-5.600A14.500 14.500 0 0 0 15 .5C9 .5 7.500 6 11 12z" fill="${c}" transform="rotate(${i * 45} 15 15)"/><path d="M15 5.200a9.800 9.800 0 0 1 7.100 3" fill="none" stroke="${c}" stroke-width="8.500" transform="rotate(${i * 45 - 22} 15 15)"/>`).join('') + '<circle cx="15" cy="15" r="5" fill="#fff"/>'],
  photos: [B, '<defs><linearGradient id="a" x2="0" y2="1"><stop stop-color="#2b6fd0"/><stop offset="1" stop-color="#1547a0"/></linearGradient><linearGradient id="b" x2="1" y2="1"><stop stop-color="#45d3f5"/><stop offset="1" stop-color="#1593dd"/></linearGradient></defs><rect x="1" y="2" width="26" height="26" rx="3" fill="url(#a)"/><path d="M14 2h10a3 3 0 0 1 3 3v12z" fill="#6a4fb8" opacity=".7"/><path d="M2 24l10-11c1.200-1.200 2.500-1.200 3.700 0L27 25a3 3 0 0 1-3 3H4a3 3 0 0 1-2-4z" fill="url(#b)"/><path d="M12 28l8-8 7 7-2 1z" fill="#0f6fc6"/><circle cx="20.500" cy="6.500" r="2.300" fill="#e8f4ff"/>'],
  up: [B, '<path d="M7 19.500l8-8.500 8 8.500" fill="none" stroke="#fff" stroke-width="1.500"/>'],
  battery: [B, '<path d="M10 10.500h14.500v9H8.500v-4" fill="none" stroke="#fff" stroke-width="1.500"/><path d="M11 12.300h11.800v5.400H11zM25 13h1.500v4H25zM4.500 8h1.300v3H4.500zM7.500 8h1.300v3H7.500zM3.700 10.500h6v2.700l-1.500 1.500H5.200l-1.500-1.500z" fill="#fff"/><path d="M6.700 14v5.500h3" fill="none" stroke="#fff" stroke-width="1.200"/>'],
  notif: [B, '<path d="M5 5.500h20v16.500H14l-4 4v-4H5z" fill="#fff"/><path d="M8.500 10h13M8.500 13.700h13M8.500 17.400h9" stroke="#1d1d1d" stroke-width="1.400"/><circle cx="24" cy="24.500" r="9.500" fill="#393939" stroke="#8d8d8d" stroke-width="1"/><text x="24" y="29" text-anchor="middle" font-family="Open Sans,sans-serif" font-weight="600" font-size="12.500" fill="#fff">3</text>']
});

/* Inline icon; width follows the glyph's aspect ratio */
class UiIcon extends HTMLElement {
  connectedCallback() {
    const [[w, h], body] = ICONS[this.getAttribute('name')];
    const s = +this.getAttribute('size') || 24;
    const hh = s * h / w;
    this.attachShadow({ mode: 'open' }).innerHTML = `<style>:host{display:block;flex:none;width:${s}px;height:${hh}px}svg{display:block;overflow:visible}</style><svg width="${s}" height="${hh}" viewBox="0 0 ${w} ${h}">${body}</svg>`;
  }
}
/* Single-line label with a fixed measure: tracking or horizontal scale is adjusted to it */
class FitText extends HTMLElement {
  connectedCallback() {
    const w = +this.getAttribute('w');
    const r = this.attachShadow({ mode: 'open' });
    r.innerHTML = `<style>:host{display:block;flex:none;width:${w}px;white-space:pre}span{display:inline-block;transform-origin:0 50%}</style><span><slot></slot></span>`;
    const s = r.querySelector('span');
    const n = s.getBoundingClientRect().width;
    if (this.hasAttribute('squeeze')) s.style.transform = `scaleX(${w / n})`;
    else s.style.letterSpacing = (w - n) / (this.textContent.length - 1) + 'px';
  }
}
const icon = (name, size) => `<ui-icon name="${name}" size="${size}"></ui-icon>`;
/* Flex row: every entry is [centre x, width, markup]; margins carry the gaps */
const row = (start, items) => {
  let x = start;
  return items.map(([c, w, html]) => {
    const l = c - w / 2, m = l - x;
    x = l + w;
    return `<div class="i" style="margin-left:${m}px;width:${w}px">${html}</div>`;
  }).join('');
};
const ic = (c, name, size) => [c, size, icon(name, size)];
const define = (tag, css, html) => customElements.define(tag, class extends HTMLElement {
  connectedCallback() {
    this.attachShadow({ mode: 'open' }).innerHTML = `<style>*{box-sizing:border-box}.i{flex:none;display:flex;align-items:center;justify-content:center}${css}</style>${typeof html === 'function' ? html(this) : html}`;
  }
});
customElements.define('ui-icon', UiIcon);
customElements.define('fit-text', FitText);

define('browser-tab', `
:host{display:flex;flex:none;width:160px;height:50px;align-items:center;padding-left:14px;position:relative;color:#c3d0d2}
.fav{width:20px;display:flex;justify-content:center}
.t{width:74px;margin-left:10px;font-size:15px;-webkit-mask-image:linear-gradient(90deg,#000 68%,rgba(0,0,0,.15) 98%)}
.x{margin-left:11px}
:host([tight]) .x{margin-left:9.500px}
.sep{width:2px;height:20px;background:#293d42;margin-left:auto;margin-right:-1px;border-radius:1px}
:host([active]){width:154px;margin:0;padding-left:13px;color:#dfe7e8}
:host([active]) .sep{display:none}
.shape{position:absolute;left:-8px;top:7px;z-index:-1}
`, el => {
  const a = el.hasAttribute('active');
  return `${a ? '<svg class="shape" width="174" height="43"><path d="M0 43c8 0 12-4 12-12V12C12 4 16 0 24 0h126c8 0 12 4 12 12v19c0 8 4 12 12 12z" fill="#293d42"/></svg>' : ''}
  <div class="fav">${icon(el.getAttribute('icon'), +el.getAttribute('s') || 19)}</div><div class="t"><fit-text squeeze w="${el.getAttribute('w')}">${el.getAttribute('label')}</fit-text></div><div class="x">${icon('close', 14)}</div><div class="sep"></div>`;
});

define('browser-tabs', `
:host{display:flex;height:50px;background:#0a2225;align-items:center;color:#c3d0d2;position:relative;z-index:0}
.dd{width:35px;height:35px;margin-left:8px;margin-right:3px;border-radius:11px;background:#293d42;display:flex;align-items:center;justify-content:center}
`, `<div class="dd">${icon('down', 21)}</div>
<browser-tab icon="drive" label="Session 02" w="70"></browser-tab>
<browser-tab icon="gmail" label="Task Requi" w="71"></browser-tab>
<browser-tab icon="drive" label="Order Man" w="71.5"></browser-tab>
<browser-tab icon="openai" label="Fix convers" w="72.5"></browser-tab>
<browser-tab icon="jwt" s="20" label="JSON Web" w="70"></browser-tab>
<browser-tab icon="shield" s="20" label="JWT Secret" w="72"></browser-tab>
<browser-tab icon="stack" label="javascript -" w="71"></browser-tab>
<browser-tab icon="github" s="20" label="Your Repos" w="73" tight></browser-tab>
<browser-tab icon="gmail" label="Inbox (3,03" w="72" style="width:159px" tight></browser-tab>
<browser-tab icon="gmail" label="Your Order" w="71.5" active tight></browser-tab>
${row(1639, [ic(1664, 'plus', 17), ic(1777.5, 'min', 20), ic(1833, 'restore', 20), ic(1891, 'close', 18)])}`);

define('browser-toolbar', `
:host{display:flex;height:54px;align-items:center;padding-top:4px;background:#293d42;color:#c7d5d8;border-radius:10px 10px 0 0}
.omni{width:1170px;height:42px;border-radius:21px;background:#12282b;margin-left:22px;display:flex;align-items:center;padding-left:6px;font-size:17.500px;color:#c0cacb}
.site{width:30px;height:30px;border-radius:15px;background:#293d42;display:flex;align-items:center;justify-content:center;margin-right:11px}
b{font-weight:400;color:#f1f5f5}
.av{width:25px;height:25px;border-radius:50%;background:#ab47bc;color:#fff;font:400 14px Roboto,sans-serif;display:flex;align-items:center;justify-content:center}
.s{width:2px;height:19px;background:#4a6268}
.dim{opacity:.45}
`, `${row(0, [ic(28, 'arrowL', 20), [72.500, 20, `<div class="dim">${icon('arrowR', 20)}</div>`], ic(117.5, 'reload', 21)])}
<div class="omni"><div class="site">${icon('site', 19)}</div><fit-text squeeze w="575"><b>mail.google.com</b>/mail/u/1/#inbox/FMfcgzQbgRsswsJFMKRffhDHdXtLdmxL</fit-text><div style="margin-left:507px">${icon('star', 22)}</div></div>
${row(1320, [ic(1351, 'cursor', 20), ic(1397, 'fq', 21), ic(1442, 'ring', 21), ic(1487.5, 'pages', 20), ic(1532.5, 'ruler', 20), ic(1577, 'dropper', 20), ic(1622.5, 'camera', 20), ic(1667.5, 'vv', 20), ic(1713, 'puzzle', 24), [1746, 2, '<div class="s"></div>'], ic(1780, 'code', 21), [1814, 2, '<div class="s"></div>'], [1847, 25, '<div class="av">S</div>'], ic(1892, 'dots', 21)])}`);

const bm = (name, x, tx, w, label, s = 19) => [[x, s, icon(name, s)], [tx + w / 2, w, `<fit-text squeeze w="${w}">${label}</fit-text>`]];
define('bookmarks-bar', `
:host{display:flex;height:47px;align-items:center;padding-bottom:5px;background:#293d42;color:#d1d5d5;font-size:15px;border-bottom:1px solid #43484a}
fit-text{margin-top:-2px}
.s{width:2px;height:20px;background:#4a6268}
`, row(0, [ic(32, 'grid', 21), [61, 2, '<div class="s"></div>'],
  ...bm('translate', 90, 108, 58, 'Translate', 20), ...bm('gmail', 196, 214, 38, 'Gmail'),
  ...bm('mutaz', 283, 300, 137, 'Mutaz.net / Free Pr...'), ...bm('drive', 475, 493, 142, 'First Year Electric 20...'),
  ...bm('wkey', 668, 685, 145, 'Generic key to instal...', 20), ...bm('drive', 860, 878, 142, 'Theme - Google Dri...'),
  ...bm('coursera', 1053, 1070, 139, 'Coursera | Online C...', 20), ...bm('coursera', 1245, 1262, 145, 'Japanese for beginn...', 20),
  ...bm('drive', 1438, 1455, 145, 'First Elec 2nd Term -...'), ic(1728, 'more2', 14), [1756, 2, '<div class="s"></div>'],
  ...bm('folderO', 1787.5, 1808, 94, 'All Bookmarks', 23)]));

define('letter-avatar', `
:host{display:flex;flex:none;align-items:center;justify-content:center;border-radius:50%;background:#33691e;color:#fff}
`, '<slot></slot>');

define('gmail-header', `
:host{display:flex;height:80px;align-items:center;color:#5f6368}
.name{font-size:28px;color:#444746;margin-left:13.500px}
.search{margin-left:117px;width:900px;height:60px;border-radius:30px;background:#e9eef6;display:flex;align-items:center;color:#444746}
.q{font-size:20px;color:#5f6368;margin-left:10.500px}
letter-avatar{width:40px;height:40px;font-size:21px;-webkit-text-stroke:.4px}
`, `${row(0, [ic(45, 'menu', 26), ic(100.5, 'gmail', 38)])}
<fit-text class="name" w="70">Gmail</fit-text>
<div class="search"><div style="margin-left:15.500px">${icon('search', 29)}</div><fit-text class="q" w="106">Search mail</fit-text><div style="margin-left:690px">${icon('tune', 27)}</div></div>
${row(1220, [ic(1575, 'help', 30), ic(1630, 'gear', 30), [1683, 25, `<div style="color:#3c4043">${icon('spark', 25)}</div>`], ic(1748.5, 'slashV', 41), ic(1818, 'apps', 24), [1878, 40, '<letter-avatar>S</letter-avatar>']])}`);

const nav = (name, label, w, extra = '', cls = '') => `<div class="nav ${cls}"><div class="ic">${icon(name, name === 'down' ? 22 : 23)}</div><fit-text w="${w}">${label}</fit-text>${extra}</div>`;
define('gmail-sidebar', `
:host{display:flex;flex-direction:column;width:320px;flex:none;padding-top:10px;color:#202124;font-size:17.500px}
.compose{margin-left:10px;width:178px;height:70px;border-radius:20px;background:#c2e7ff;display:flex;align-items:center;padding-left:22px;color:#001d35;-webkit-text-stroke:.35px;margin-bottom:20px}
.compose fit-text{margin-left:22px}
.nav{width:300px;height:40px;display:flex;align-items:center;border-radius:0 20px 20px 0}
.nav fit-text{margin-left:23.500px}
.ic{margin-left:33.500px;width:23px;display:flex;justify-content:center;color:#4d5053}
.on{background:#d3e3fd;font-weight:700;color:#001d35}
.nav .n{font-size:15px;margin-left:141px}
.labels{display:flex;align-items:center;height:54px;margin-top:20px;padding-left:33px;font-size:20px;color:#1f1f1f}
.up{margin:auto 0 20px 25px;width:270px;height:40px;border-radius:20px;background:#fff;display:flex;align-items:center;padding-left:21px;color:#444746}
`, `<div class="compose">${icon('pencil', 26)}<fit-text w="78">Compose</fit-text></div>
${nav('inbox', 'Inbox', 46.5, '<fit-text class="n" w="17">32</fit-text>', 'on')}
${nav('star', 'Starred', 58)}${nav('clock', 'Snoozed', 68.5)}${nav('send', 'Sent', 35.5)}${nav('draft', 'Drafts', 47.5)}${nav('down', 'More', 40.5)}
<div class="labels"><fit-text w="61" style="-webkit-text-stroke:.2px">Labels</fit-text><div style="margin-left:173.500px;color:#5f6368">${icon('plus', 20)}</div></div>
<div class="up"><div style="color:#000">${icon('one', 21)}</div><fit-text style="margin-left:20.500px" w="69">Upgrade</fit-text><div style="margin-left:100.500px;color:#111">${icon('arrowR', 21)}</div></div>`);

define('pill-button', `
:host{display:flex;flex:none;height:45px;border:1px solid #747775;border-radius:23px;align-items:center;color:#444746;font-size:17.500px}
`, '<slot></slot>');

define('mail-view', `
:host{display:flex;flex-direction:column;width:1530px;height:779px;background:#fff;border-radius:20px;color:#444746}
.bar{display:flex;align-items:center;height:60px}
.sep{width:1px;height:25px;background:#e0e2e4}
.count{font-size:15px;color:#5f6368}
.subj{display:flex;align-items:center;height:46px;margin-top:20px;padding-left:90px}
h2{margin:-2px 0 0;font-weight:400;font-size:27.500px;color:#1f1f1f}
.chip{margin:-2px 0 0 14px;width:63px;height:23px;border-radius:5px;background:#dfe1df;display:flex;align-items:center;padding-left:5px;font-size:15px;color:#444746}
.chip fit-text{margin-top:-1px}
.msg{display:flex;padding-left:20px;margin-top:19px;height:62px}
letter-avatar{width:50px;height:50px;font-size:27px;-webkit-text-stroke:.5px}
.who{margin-left:20px;width:300px}
.name{font-size:17.500px;font-weight:700;color:#1f1f1f;height:25px;line-height:25px}
.to{display:flex;align-items:center;height:24px;font-size:15px;color:#5f6368}
.tri{border:5.500px solid transparent;border-top:5.500px solid #5f6368;border-bottom:0;margin-left:8px}
.meta{display:flex;align-items:center;height:26px;color:#4d5053}
.time{font-size:15px;color:#5f6368;margin-top:-2px}
.body{margin:1px 0 0 90px;font:16px/20px "Liberation Sans",Arial,sans-serif;color:#222}
.acts{display:flex;gap:10px;margin:49px 0 0 90px}
`, `<div class="bar">${row(320, [ic(352.5, 'arrowL', 20), ic(422.5, 'archive', 22), ic(477.5, 'spam', 22), ic(532, 'trash', 21), [569.5, 1, '<div class="sep"></div>'], ic(607, 'unread', 23), ic(662, 'moveto', 23), ic(712.5, 'dots', 21), [1688, 44, '<fit-text class="count" w="44">1 of 75</fit-text>'], [1747.5, 20, `<div style="opacity:.45">${icon('left', 20)}</div>`], ic(1797, 'right', 20)])}</div>
<div class="subj"><h2><fit-text w="378">Your Order #6 Status Changed</fit-text></h2><div class="chip"><fit-text w="37">Inbox</fit-text><div style="margin-left:5px">${icon('close', 11)}</div></div>${row(865, [ic(1753, 'print', 24), ic(1798, 'open', 22)])}</div>
<div class="msg"><letter-avatar>S</letter-avatar><div class="who"><fit-text class="name" w="269.5">shahd.mostafa1245@gmail.com</fit-text><div class="to"><fit-text w="38.5">to me</fit-text><div class="tri"></div></div></div>
<div class="meta">${row(710, [[1528, 164, '<fit-text class="time" w="164">8:55 PM (0 minutes ago)</fit-text>'], ic(1647.5, 'star', 23), ic(1697, 'smile', 24), ic(1747.5, 'reply', 23), ic(1797.5, 'dots', 19)])}</div></div>
<p class="body"><fit-text w="411">The status of your order has been updated to: <b>Delivered</b>.</fit-text></p>
<div class="acts"><pill-button style="width:130px;padding-left:22.500px">${icon('reply', 23)}<fit-text w="46" style="margin-left:10.500px">Reply</fit-text></pill-button><pill-button style="width:139px;padding-left:16px">${icon('forward', 23)}<fit-text w="67" style="margin-left:11px">Forward</fit-text></pill-button><pill-button style="width:45px;justify-content:center">${icon('smile', 25)}</pill-button></div>`);

define('side-panel', `
:host{display:flex;flex-direction:column;align-items:center;width:70px;padding-top:23.500px;padding-left:1px;color:#111;box-sizing:border-box}
ui-icon{margin-bottom:46px}
.line{width:25px;height:1px;background:#dadce0;margin-top:-2px;margin-bottom:45px}
.end{margin-top:auto;margin-bottom:5px;color:#202124}
.end ui-icon{margin-bottom:20px}
`, `${icon('calendar', 24)}${icon('keep', 24)}${icon('tasks', 24)}${icon('contacts', 22)}<div class="line"></div>${icon('plus', 22)}<div class="end">${icon('right', 20)}</div>`);

const APPS = ['copilot', 'folder', 'store', 'teams', 'steam', 'discord', 'rec', 'telegram', 'messenger', 'zoom', 'whatsapp', 'pdf', 'chrome', 'vscode', 'vs', 'fork', 'postman', 'vbox', 'drawio', 'ps', 'xd', 'matlab', 'docker', 'db', 'sticky', 'monitor', 'cmd', 'ring2', 'photos'];
const RUN = ['folder', 'vs', 'cmd', 'ring2', 'photos'];
define('task-bar', `
:host{display:flex;height:50px;align-items:center;color:#fff;font-size:15px;background:linear-gradient(90deg,#1c1c1c 0,#1c1c1c 320px,#2a2120 360px,#42202a 400px,#3f1d28 500px,#321d28 600px,#2e1c28 720px,#221c20 770px,#2a1b26 860px,#2d1b27 1000px,#261b23 1120px,#1e1c1e 1240px,#1c1c1c 1280px,#1c1c1c 1440px,#383028 1490px,#463c32 1540px,#352e28 1600px,#201e1d 1670px,#1c1c1c 1720px)}
.app{width:51px;height:50px;display:flex;flex:none;align-items:center;justify-content:center;border-bottom:3px solid transparent;padding-top:3px}
.run{width:40px;margin:0 5.500px;border-color:#ffdcb3}
.cur{background:#5c5759;border-color:#ffdcb3}
.clock{margin-left:15px;width:70px;display:flex;flex-direction:column;align-items:center;line-height:23px}
.end{width:1px;height:50px;background:#6b6b6b;margin-left:auto;margin-right:5px}
`, `${row(0, [ic(30, 'win', 30), ic(90, 'wsearch', 30), ic(149.5, 'taskview', 30)])}<div style="width:19px;flex:none"></div>
${APPS.map(a => `<div class="app ${a === 'chrome' ? 'cur' : RUN.includes(a) ? 'run' : ''}">${icon(a, 30)}</div>`).join('')}
${row(1662.5, [ic(1680, 'up', 26), ic(1710, 'battery', 30), [1747.5, 29, '<fit-text squeeze w="29">ENG</fit-text>']])}
<div class="clock"><fit-text squeeze w="52">8:55 PM</fit-text><fit-text squeeze w="68">7/27/2025</fit-text></div>
<div style="margin-left:17px">${icon('notif', 30)}</div><div class="end"></div>`);

define('desktop-screen', `
:host{display:flex;flex-direction:column;width:1920px;height:1080px;background:#f9fbff;overflow:hidden}
.chrome{background:#0a2225;font-family:"Open Sans","Noto Sans",sans-serif}
.app{flex:1;display:flex;flex-direction:column;font-family:Roboto,"Open Sans",sans-serif;min-height:0}
.cols{display:flex;flex:1;min-height:0}
task-bar{flex:none;font-family:"Open Sans","Noto Sans",sans-serif}
`, `<div class="chrome"><browser-tabs></browser-tabs><browser-toolbar></browser-toolbar><bookmarks-bar></bookmarks-bar></div>
<div class="app"><gmail-header></gmail-header><div class="cols"><gmail-sidebar></gmail-sidebar><mail-view></mail-view><side-panel></side-panel></div></div>
<task-bar></task-bar>`);
</script>
</body>
</html>
